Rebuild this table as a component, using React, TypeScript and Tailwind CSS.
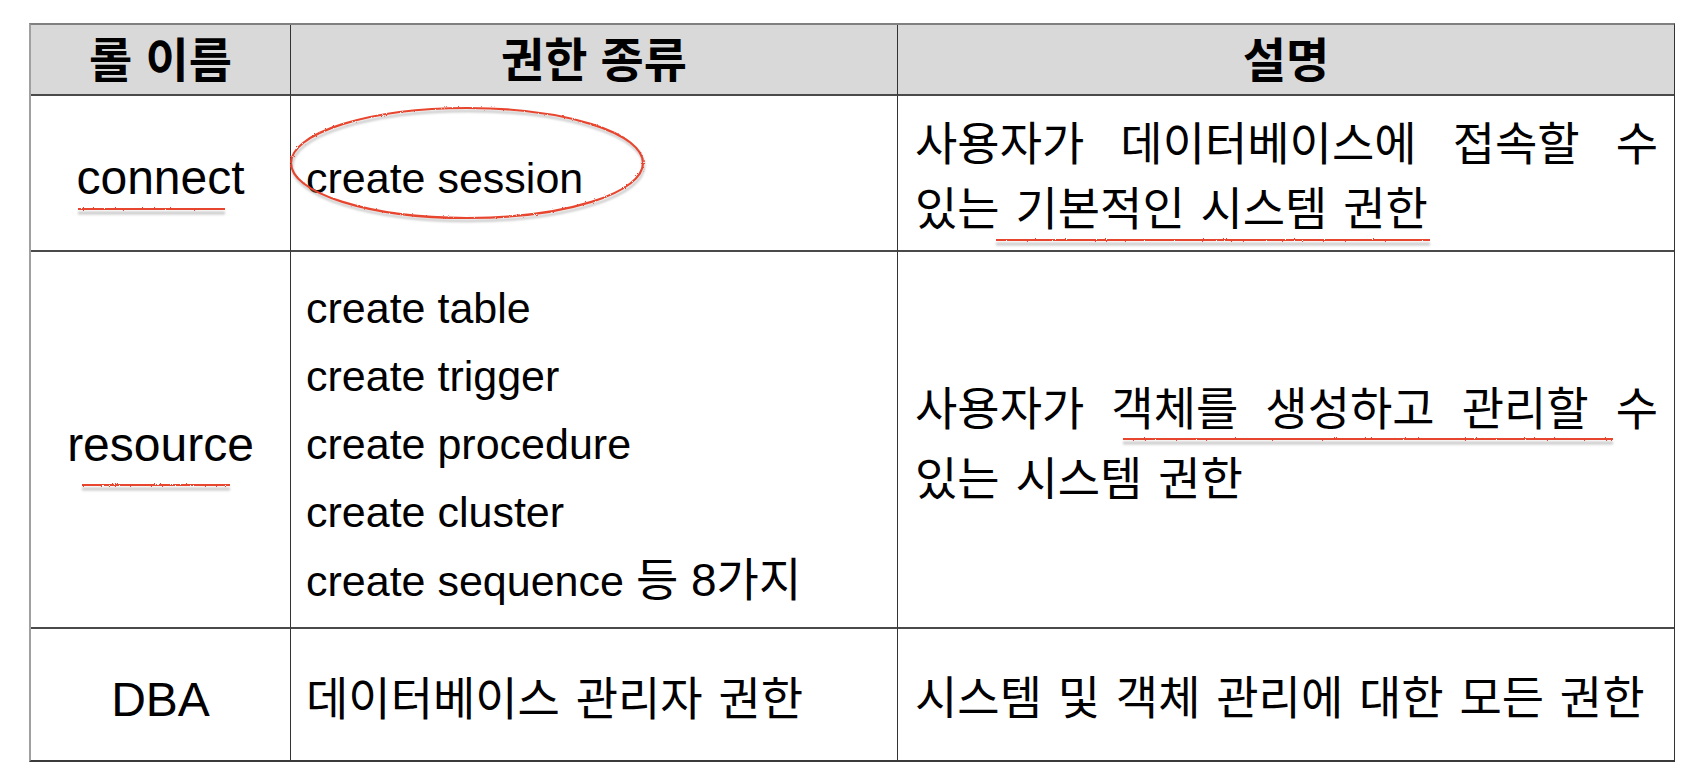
import React from "react";

const roles = [
  {
    name: "connect",
    perms: [<>create session</>],
    desc: ["사용자가 데이터베이스에 접속할 수", "있는 기본적인 시스템 권한"],
  },
  {
    name: "resource",
    perms: [
      <>create table</>,
      <>create trigger</>,
      <>create procedure</>,
      <>create cluster</>,
      <>
        create sequence <span className="text-[46px]">등 8가지</span>
      </>,
    ],
    desc: ["사용자가 객체를 생성하고 관리할 수", "있는 시스템 권한"],
  },
  {
    name: "DBA",
    perms: [<span className="text-[46px] [word-spacing:3px]">데이터베이스 관리자 권한</span>],
    desc: ["시스템 및 객체 관리에 대한 모든 권한"],
  },
];

// red pen marks drawn over the table
function Marks() {
  const lines = [
    { x1: 78, x2: 225, y: 209 },
    { x1: 82, x2: 230, y: 485 },
    { x1: 996, x2: 1430, y: 240 },
    { x1: 1123, x2: 1613, y: 439 },
  ];
  return (
    <svg
      className="pointer-events-none absolute left-0 top-0"
      width="1694"
      height="776"
      viewBox="0 0 1694 776"
    >
      <defs>
        <filter id="rough" x="-5%" y="-20%" width="110%" height="140%">
          <feTurbulence type="fractalNoise" baseFrequency="0.9" numOctaves="2" seed="3" />
          <feDisplacementMap in="SourceGraphic" scale="2.2" />
        </filter>
        <filter id="blur" x="-5%" y="-50%" width="110%" height="200%">
          <feGaussianBlur stdDeviation="1.2" />
        </filter>
      </defs>
      <g filter="url(#blur)" opacity="0.45">
        <ellipse cx="468" cy="166" rx="176" ry="55" fill="none" stroke="#888" strokeWidth="2.5" />
        {lines.map((l) => (
          <line key={"s" + l.y} x1={l.x1} x2={l.x2} y1={l.y + 4} y2={l.y + 4} stroke="#888" strokeWidth="3" />
        ))}
      </g>
      <g filter="url(#rough)">
        <ellipse cx="467" cy="163" rx="176" ry="55" fill="none" stroke="#e8452f" strokeWidth="2.2" />
        {lines.map((l) => (
          <line key={l.y} x1={l.x1} x2={l.x2} y1={l.y} y2={l.y} stroke="#e8452f" strokeWidth="2" />
        ))}
      </g>
    </svg>
  );
}

export default function App() {
  return (
    <div className="relative h-[776px] w-[1694px] bg-white pl-[29px] pt-[23px] font-['Liberation_Sans','Noto_Sans_CJK_KR',sans-serif] text-black">
      <div className="grid w-[1646px] grid-cols-[260px_607px_776px] grid-rows-[71px_156px_377px_131px] border-b-2 border-l-2 border-r border-t-2 border-b-[#3a3a3a] border-l-[#a0a0a0] border-r-[#333] border-t-[#808080]">
        <div className="flex items-center justify-center border-b-2 border-r border-b-[#4a4a4a] border-r-[#333] bg-[#d9d9d9] pt-[4px] text-[47px] font-bold">
          롤 이름
        </div>
        <div className="flex items-center justify-center border-b-2 border-r border-b-[#4a4a4a] border-r-[#333] bg-[#d9d9d9] pt-[4px] text-[47px] font-bold">
          권한 종류
        </div>
        <div className="flex items-center justify-center border-b-2 border-b-[#4a4a4a] bg-[#d9d9d9] pt-[4px] text-[47px] font-bold">
          설명
        </div>

        {roles.map((r, i) => {
          const last = i === roles.length - 1;
          const rowLine = last ? "" : "border-b-2 border-b-[#4a4a4a]";
          return (
            <React.Fragment key={r.name}>
              <div
                className={`flex items-center justify-center border-r border-r-[#333] pt-[10px] text-[48px] ${rowLine}`}
              >
                {r.name}
              </div>
              <div
                className={`flex flex-col justify-center border-r border-r-[#333] pl-[15px] pt-[10px] text-[43px] leading-[68px] ${rowLine}`}
              >
                {r.perms.map((p, j) => (
                  <div key={j} className="whitespace-nowrap">
                    {p}
                  </div>
                ))}
              </div>
              <div
                className={`flex flex-col justify-center pl-[17px] pr-[16px] pt-[8px] text-[46px] [word-spacing:3px] ${
                  i === 1 ? "leading-[70px]" : "leading-[65px]"
                } ${rowLine}`}
              >
                {r.desc.map((d, j) => (
                  <div
                    key={d}
                    className={
                      j < r.desc.length - 1
                        ? "whitespace-nowrap text-justify [text-align-last:justify]"
                        : "whitespace-nowrap"
                    }
                  >
                    {d}
                  </div>
                ))}
              </div>
            </React.Fragment>
          );
        })}
      </div>
      <Marks />
    </div>
  );
}
